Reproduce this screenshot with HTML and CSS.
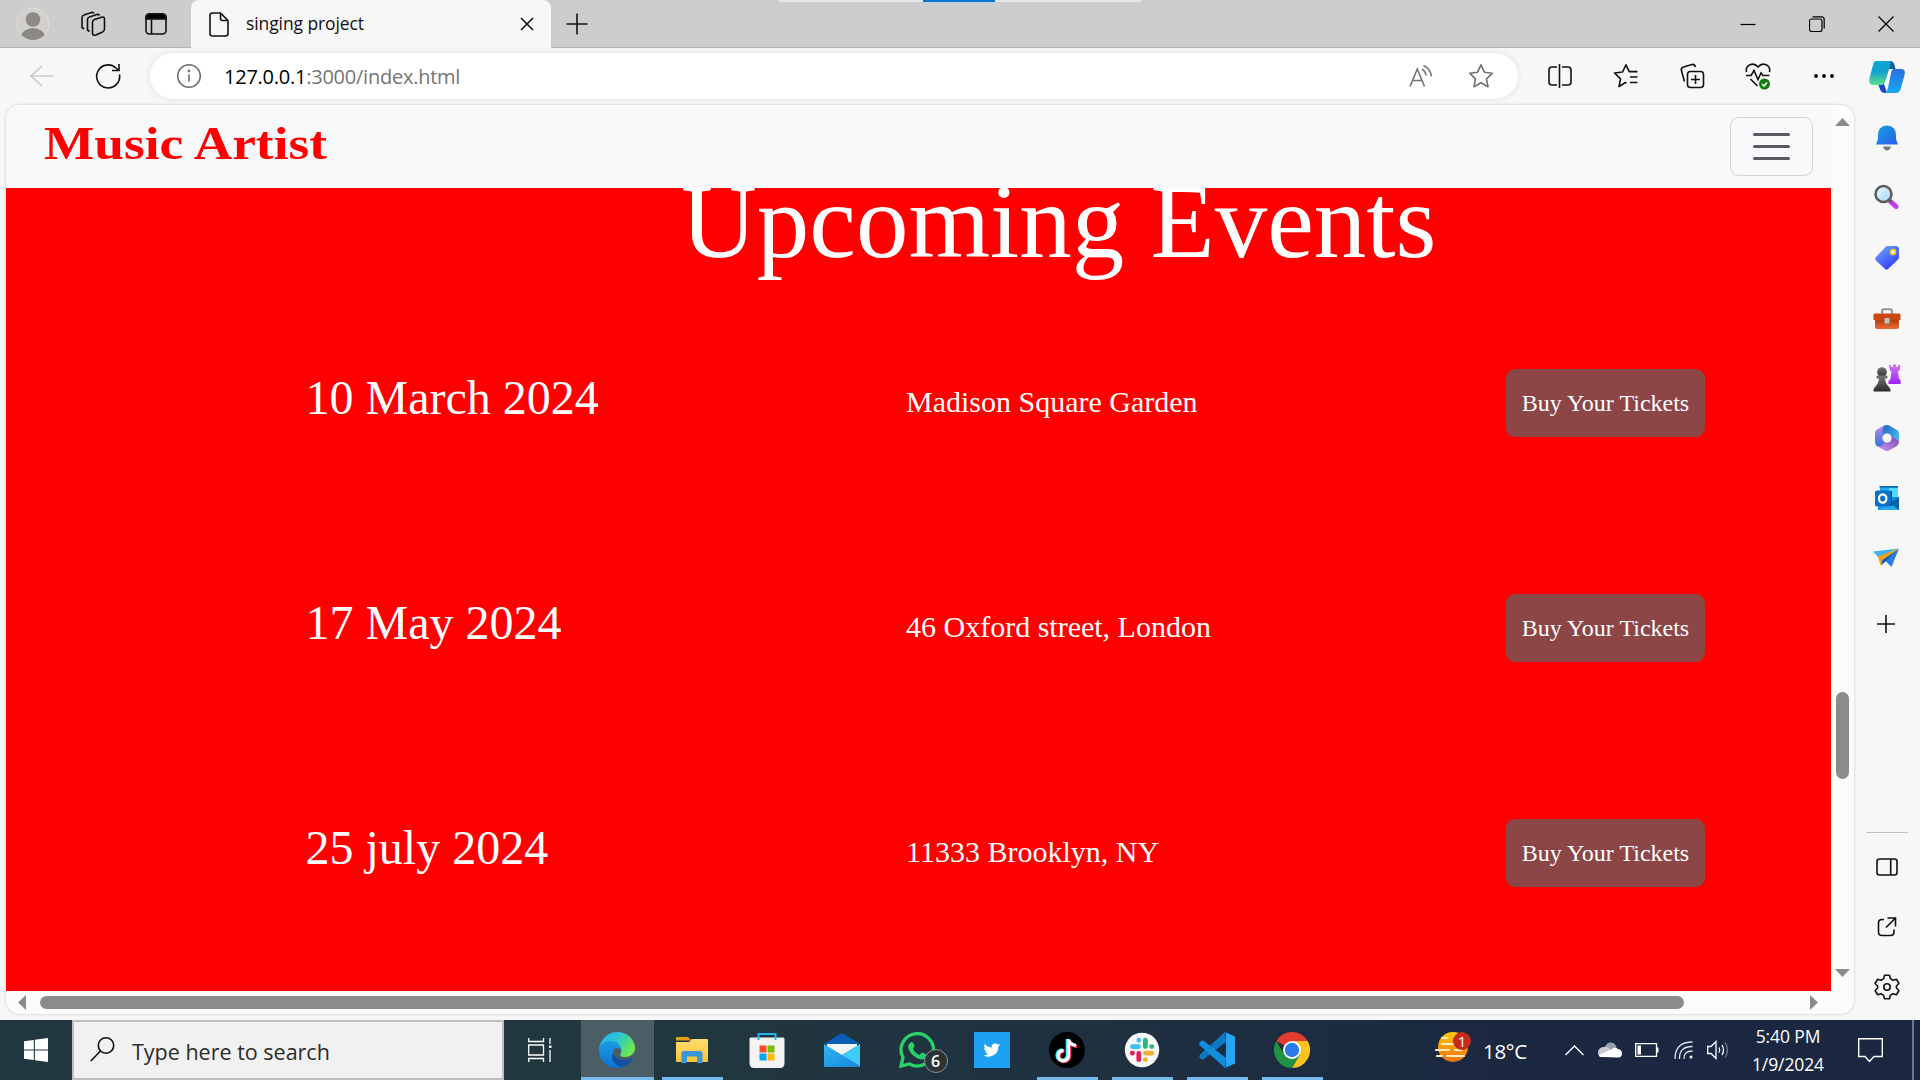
FILE: index.html
```html
<!DOCTYPE html>
<html lang="en">
<head>
<meta charset="utf-8">
<title>singing project</title>
<link rel="stylesheet" href="styles.css">
</head>
<body>
<div class="desktop">
  <header class="tabstrip">
    <div class="slot slot-avatar">
      <svg width="34" height="34" viewBox="0 0 34 34"><defs><clipPath id="av"><circle cx="17" cy="17" r="16"/></clipPath></defs><circle cx="17" cy="17" r="16" fill="#d2d0cc" stroke="#dfddd9" stroke-width="1"/><g clip-path="url(#av)" fill="#8c8883"><circle cx="17" cy="12.5" r="7.3"/><ellipse cx="17" cy="30" rx="12" ry="9"/></g></svg>
    </div>
    <div class="slot slot-work">
      <svg width="26" height="26" viewBox="0 0 26 26" class="ln"><path d="M14.500 8.500 21.500 6.200Q24.500 5.500 24.500 8V18Q24.500 20 22.500 21L16 24Q12.500 25 12.500 22V11.500Q12.500 9.200 14.500 8.500Z"/><path d="M9.500 20.500 7.500 19V8.500Q7.500 6.500 9.500 6L17 3.500Q19 3 19.500 4.500"/><path d="M4 18 2 16.500V6.500Q2 4.500 4 4L11.500 1.500Q13.500 1 14 2.500"/></svg>
    </div>
    <div class="slot slot-vtabs">
      <svg width="22" height="22" viewBox="0 0 22 22" class="ln"><rect x="1" y="1" width="20" height="20" rx="3.500"/><path d="M1 4.500Q1 1 4.500 1H17.500Q21 1 21 4.500V6H1Z" fill="#000"/><path d="M6.500 6V21"/></svg>
    </div>
    <div class="tab">
      <svg width="20" height="25" viewBox="0 0 20 25" class="ln"><path d="M3.500 1H11.500L19 8.500V21.500Q19 24 16.500 24H3.500Q1 24 1 21.500V3.500Q1 1 3.500 1ZM11.500 1V6.500Q11.500 8.500 13.500 8.500H19"/></svg>
      <span class="tab-title">singing project</span>
      <svg width="14" height="14" viewBox="0 0 14 14" class="ln"><path d="M1 1 13 13M13 1 1 13"/></svg>
    </div>
    <svg class="newtab ln" width="22" height="22" viewBox="0 0 22 22"><path d="M11 .5V21.500M.5 11H21.500"/></svg>
    <div class="snapbar"><span></span></div>
    <div class="winbtns">
      <svg width="16" height="16" viewBox="0 0 16 16" class="thin"><path d="M.5 8.500H15.500"/></svg>
      <svg width="16" height="16" viewBox="0 0 16 16" class="thin"><rect x=".5" y="3" width="12.500" height="12.500" rx="2"/><path d="M3.500 .8H12.500Q15.200 .8 15.200 3.500V12.500"/></svg>
      <svg width="16" height="16" viewBox="0 0 16 16" class="thin"><path d="M.5 .5 15.500 15.500M15.500 .5 .5 15.500"/></svg>
    </div>
  </header>

  <div class="toolbar">
    <div class="slot slot-back"><svg width="24" height="22" viewBox="0 0 24 22" class="ln pale"><path d="M24 11H1M12 1 1 11 12 21"/></svg></div>
    <div class="slot slot-reload"><svg width="26" height="26" viewBox="0 0 26 26" class="ln"><path d="M24.500 11.500A11.500 11.500 0 1 1 21 5L24 7.500M24 1V7.500H17"/></svg></div>
    <div class="address">
      <div class="slot slot-info"><svg width="26" height="26" viewBox="0 0 26 26" class="ln grey"><circle cx="13" cy="13" r="11.300"/><path d="M13 11.500V18.500"/><circle cx="13" cy="8" r=".6"/></svg></div>
      <span class="url"><b>127.0.0.1</b>:3000/index.html</span>
      <div class="slot s60"><svg width="24" height="24" viewBox="0 0 24 24" class="ln grey"><path d="M1 22.500 8.300 5 15.500 22.500M3.500 16.500H13"/><path d="M13 5Q16.500 7 17 11.500M14.500 1.500Q21.500 4.500 22.500 12.500"/></svg></div>
      <div class="slot s60"><svg width="26" height="26" viewBox="0 0 26 26" class="ln grey"><path stroke-linejoin="round" d="M13 1.800 16.400 9.200 24.300 10.200 18.500 15.800 20 23.700 13 19.800 6 23.700 7.500 15.800 1.700 10.200 9.600 9.200Z"/></svg></div>
    </div>
    <div class="tools">
      <div class="slot"><svg width="24" height="26" viewBox="0 0 24 26" class="ln"><path d="M9 4H4Q1 4 1 7V19Q1 22 4 22H9M14 4H20Q23 4 23 7V19Q23 22 20 22H14M11.500 1V25"/></svg></div>
      <div class="slot"><svg width="26" height="26" viewBox="0 0 26 26" class="ln"><path stroke-linejoin="round" d="M13.500 20 12.500 19.500 6 23.500 7.500 15.800 1.500 10 9.500 9 13 1.800 16.200 8.600H24.500M17 14H24.500M17 19.500H24.500"/></svg></div>
      <div class="slot"><svg width="26" height="26" viewBox="0 0 26 26" class="ln"><rect x="8.500" y="8.500" width="16" height="16" rx="3"/><path d="M16.500 12V21M12 16.500H21M5.500 18.500 2.500 8Q1.500 5 4.500 4L13 1.500Q15.500 1 16.500 4"/></svg></div>
      <div class="slot"><svg width="26" height="28" viewBox="0 0 26 28" class="ln"><path d="M1.500 10C0 3 8.500-.5 13 5 17.500-.5 26 3 24.500 10M1 13.500H6L9 8.500 13 17.500 16 11 18 13.500H24.500M5.500 17 12.500 24"/><circle cx="19.500" cy="22" r="5.500" fill="#107c10" stroke="none"/><path d="M17 22 19 24 22 20.500" stroke="#fff"/></svg></div>
      <div class="slot"><svg width="22" height="6" viewBox="0 0 22 6"><circle cx="3" cy="3" r="1.900"/><circle cx="11" cy="3" r="1.900"/><circle cx="19" cy="3" r="1.900"/></svg></div>
      <div class="slot slot-copilot">
        <svg width="36" height="34" viewBox="0 0 36 34"><defs><linearGradient id="c1" x1="0" y1="0" x2="0" y2="1"><stop offset="0" stop-color="#0ba5d8"/><stop offset=".45" stop-color="#12a2cf"/><stop offset="1" stop-color="#5fe08c"/></linearGradient><linearGradient id="c2" x1="0" y1="0" x2="0" y2="1"><stop offset="0" stop-color="#2b6fe0"/><stop offset="1" stop-color="#16a8f2"/></linearGradient></defs><path d="M17 1H21Q24.500 1 25.500 5L26.500 9H20Z" fill="#0d5f96"/><path d="M9 24H15L18 33H16Q12 33 11 29Z" fill="#1546cf"/><path d="M7 1H20Q22.500 1 21 6L16.500 21Q15.500 25 12 25H4Q-1 25 .5 18L4 5Q5 1 7 1Z" fill="url(#c1)"/><path d="M24 9H32Q37 9 35.500 15L32 28Q30.500 33 27 33H15.500Q18 32 19 28L22 13Q22.500 10 24 9Z" fill="url(#c2)"/><path d="M20.500 10H23Q22 11 21.500 14L19 23H15.500Q16.500 22 17 20Z" fill="#fff"/></svg>
      </div>
    </div>
  </div>

  <main class="main">
    <section class="frame">
      <div class="page">
        <nav class="navbar">
          <a class="brand">Music Artist</a>
          <button class="toggler"><i></i><i></i><i></i></button>
        </nav>
        <div class="events">
          <h1>Upcoming Events</h1>
          <div class="event"><span class="date">10 March 2024</span><span class="venue">Madison Square Garden</span><a class="buy">Buy Your Tickets</a></div>
          <div class="event"><span class="date">17 May 2024</span><span class="venue">46 Oxford street, London</span><a class="buy">Buy Your Tickets</a></div>
          <div class="event"><span class="date">25 july 2024</span><span class="venue">11333 Brooklyn, NY</span><a class="buy">Buy Your Tickets</a></div>
        </div>
      </div>
      <div class="vscroll">
        <svg width="15" height="8" viewBox="0 0 15 8"><path d="M0 8 7.500 0 15 8Z"/></svg>
        <span class="vthumb"></span>
        <svg width="15" height="8" viewBox="0 0 15 8"><path d="M0 0 7.500 8 15 0Z"/></svg>
      </div>
      <div class="hscroll">
        <svg width="8" height="15" viewBox="0 0 8 15"><path d="M8 0 0 7.500 8 15Z"/></svg>
        <span class="hthumb"></span>
        <svg width="8" height="15" viewBox="0 0 8 15"><path d="M0 0 8 7.500 0 15Z"/></svg>
      </div>
    </section>
    <aside class="sidebar">
      <div class="side"><svg width="24" height="26" viewBox="0 0 24 26"><defs><linearGradient id="b1" x1="0" y1="0" x2="1" y2="1"><stop offset="0" stop-color="#12a5dd"/><stop offset="1" stop-color="#2b5cf0"/></linearGradient></defs><path d="M8 21.500H16Q15 25.500 12 25.500T8 21.500Z" fill="#777b80"/><path d="M12 .5Q21 1 21 10V14L23 19.500H1L3 14V10Q3 1 12 .5Z" fill="url(#b1)"/></svg></div>
      <div class="side side-find"><svg width="26" height="26" viewBox="0 0 26 26"><defs><linearGradient id="s1" x1="0" y1="0" x2="1" y2="1"><stop offset="0" stop-color="#eef8ff"/><stop offset="1" stop-color="#9dd6fa"/></linearGradient></defs><path d="M18 18 23 22.500" stroke="#c438ef" stroke-width="5" stroke-linecap="round"/><path d="M15.500 15.500 18 18" stroke="#555" stroke-width="3"/><circle cx="10.500" cy="10" r="8" fill="url(#s1)" stroke="#5c5c5c" stroke-width="2.500"/></svg></div>
      <div class="side"><svg width="26" height="26" viewBox="0 0 26 26"><defs><linearGradient id="t1" x1="0" y1="0" x2=".7" y2="1"><stop offset="0" stop-color="#6fb0ff"/><stop offset="1" stop-color="#3338f0"/></linearGradient></defs><path d="M13.500 1H22Q25 1 25 4V12Q25 13.500 24 14.500L14 24Q12.500 25.500 11 24L2 15.500Q.5 14 2 12L11.500 2Q12.500 1 13.500 1Z" fill="url(#t1)"/><circle cx="19" cy="7" r="2.500" fill="#dff" stroke="#fcc419" stroke-width="1.700"/></svg></div>
      <div class="side side-tools"><svg width="28" height="22" viewBox="0 0 28 22"><defs><linearGradient id="x1" x1="0" y1="0" x2="0" y2="1"><stop offset="0" stop-color="#a93408"/><stop offset="1" stop-color="#ef6a35"/></linearGradient></defs><path d="M9 6V3.500Q9 1.300 11 1.300H17Q19 1.300 19 3.500V6" fill="none" stroke="#8e9398" stroke-width="2"/><path d="M2 10H26V19Q26 21 24 21H4Q2 21 2 19Z" fill="url(#x1)"/><path d="M2 5.500H26Q28 5.500 27.500 8V12H.5V8Q0 5.500 2 5.500Z" fill="#cb4710"/><rect x="11.500" y="10" width="5" height="5.500" rx="1" fill="#b9c4ce"/></svg></div>
      <div class="side"><svg width="28" height="28" viewBox="0 0 28 28"><defs><linearGradient id="g1" x1="0" y1="0" x2="0" y2="1"><stop offset="0" stop-color="#777"/><stop offset="1" stop-color="#2b2b2b"/></linearGradient><linearGradient id="g2" x1="0" y1="0" x2="0" y2="1"><stop offset="0" stop-color="#d07af0"/><stop offset="1" stop-color="#a020ff"/></linearGradient></defs><path d="M16 1H18V3H20V.5H23V3H25V1H27.500L26.500 7H25L26 15H27Q28 17.500 27.500 20H15.500V17L17.500 15 18.500 7H17Z" fill="url(#g2)"/><circle cx="9" cy="8" r="4.800" fill="url(#g1)"/><path d="M4 11.500H14Q15.500 13 14 14.500H12Q12.500 20 16 23Q18 25 17.500 27.500H.5Q0 25 2 23Q5.500 20 6 14.500H4Q2.500 13 4 11.500Z" fill="url(#g1)"/></svg></div>
      <div class="side"><svg width="26" height="28" viewBox="0 0 26 28"><defs><linearGradient id="m1" x1="0" y1="0" x2="0" y2="1"><stop offset="0" stop-color="#b58be8"/><stop offset="1" stop-color="#3576d8"/></linearGradient><linearGradient id="m2" x1="0" y1="0" x2="1" y2="1"><stop offset="0" stop-color="#2363c8"/><stop offset="1" stop-color="#45c6f2"/></linearGradient><linearGradient id="m3" x1="0" y1="1" x2="1" y2="0"><stop offset="0" stop-color="#c995f0"/><stop offset="1" stop-color="#7a4ba8"/></linearGradient></defs><path d="M11 1 3 5.500Q1 7 1 9V18Q1 21 3.500 22.500L7 23 13 20V8Z" fill="url(#m1)"/><path d="M10 2Q13 0 16 2L23 6Q25 7.500 25 10V17L18 12 9 12Q8 5 10 2Z" fill="url(#m2)"/><path d="M25 17V18Q25 20.500 23 22L15 26.500Q13 27.500 11 26.500L3.500 22.500Q8 23 11 18L17 11Z" fill="url(#m3)"/><circle cx="13" cy="14" r="4.600" fill="#f7f7f7"/></svg></div>
      <div class="side"><svg width="26" height="26" viewBox="0 0 26 26"><path d="M6 1H24V13H6Z" fill="#28a8ea"/><path d="M15 3H24V12H15Z" fill="#50d9ff"/><path d="M5.500 1H24V2.500H5.500Z" fill="#0864b0"/><path d="M4 12H25V25H4Z" fill="#1490df"/><path d="M25 12V25L16 18Z" fill="#0a5fa8"/><path d="M4 25H25L15 18Z" fill="#28a8ea"/><path d="M14 6H18V21H6V20H14Z" fill="#0a4375"/><rect x="1" y="5.500" width="16" height="16" rx="2" fill="#0b70c8"/><ellipse cx="8.700" cy="13.500" rx="3.700" ry="4.200" fill="none" stroke="#fff" stroke-width="2.200"/></svg></div>
      <div class="side side-send"><svg width="28" height="20" viewBox="0 0 28 20"><path d="M0 3.500 26 .5 5.500 9.500Z" fill="#3fb2ee"/><path d="M26 .5 18.500 19 12.500 13Z" fill="#2a7be8"/><path d="M8 17.500 9 12 26 .5 12.500 13.500Z" fill="#1656ba"/><path d="M26 .5 5 8.500 7.500 17 10 11.500Z" fill="#f0a112"/></svg></div>
      <div class="side side-add"><svg width="18" height="18" viewBox="0 0 18 18" class="ln"><path d="M9 0V18M0 9H18"/></svg></div>
      <div class="side-bottom">
        <div class="side"><svg width="22" height="18" viewBox="0 0 22 18" class="ln"><rect x="1" y="1" width="20" height="16" rx="2.500"/><path d="M14.700 1V17"/></svg></div>
        <div class="side"><svg width="20" height="20" viewBox="0 0 20 20" class="ln"><path d="M7 2.500H5Q1.500 2.500 1.500 6V15Q1.500 18.500 5 18.500H13.500Q17 18.500 17 15V12.500M10.500 1H18.500V9.500M18.500 1 9 10.500"/></svg></div>
        <div class="side"><svg width="26" height="26" viewBox="0 0 26 26" class="ln"><path d="M10.500 1.200H15.500L16.300 4.600 19 6.200 22.400 5.200 24.900 9.500 22.400 12V14L24.900 16.500 22.400 20.800 19 19.800 16.300 21.400 15.500 24.800H10.500L9.700 21.400 7 19.800 3.600 20.800 1.100 16.500 3.600 14V12L1.100 9.500 3.600 5.200 7 6.200 9.700 4.600Z" stroke-linejoin="round"/><circle cx="13" cy="13" r="3.200"/></svg></div>
      </div>
    </aside>
  </main>

  <footer class="taskbar">
    <div class="slot start"><svg width="24" height="24" viewBox="0 0 24 24" fill="#fff"><path d="M0 3.300 9.800 2V11.400H0ZM10.900 1.800 24 0V11.400H10.900ZM0 12.500H9.800V22L0 20.700ZM10.900 12.500H24V24L10.900 22.200Z"/></svg></div>
    <div class="search"><svg width="25" height="27" viewBox="0 0 25 27" class="ln"><circle cx="16" cy="8.500" r="7.700"/><path d="M10.500 14 .8 24"/></svg><span>Type here to search</span></div>
    <div class="slot taskview"><svg width="24" height="24" viewBox="0 0 24 24" fill="none" stroke="#fff" stroke-width="1.300"><path d="M.7 0V3.500H15.500V0M.7 24V20.500H15.500V24M.7 7H15.500V17H.7ZM22 0V6M22 12V24"/><rect x="21" y="7.500" width="2.500" height="2.500" fill="#fff" stroke="none"/></svg></div>
    <div class="app app-active"><svg width="36" height="36" viewBox="0 0 36 36"><defs><linearGradient id="e1" x1="0" y1="0" x2="1" y2=".5"><stop offset="0" stop-color="#2ab0f0"/><stop offset=".5" stop-color="#2cc3d5"/><stop offset="1" stop-color="#66ea50"/></linearGradient><linearGradient id="e2" x1="0" y1="0" x2="0" y2="1"><stop offset="0" stop-color="#1b9de2"/><stop offset="1" stop-color="#0a74d4"/></linearGradient></defs><path d="M0 18C1 7 9 0 18 0C29 0 36 8 36 16C36 22 31 25 26 25C22 25 20 23.500 22 21C24 16 18 10 11 10C5 10 1 14 0 18Z" fill="url(#e1)"/><path d="M0 18C1 12 6 9 12 9C18 9 22 13 22 18C20 15 14 15 14 21C14 28 21 31 27 30C29 32 23 36 18 36C8 36 0 28 0 18Z" fill="url(#e2)"/><path d="M14 21C11 26 15 34 23 35C28 34 32 30 34 27C34.500 26 33.500 25.500 32.500 26C24 30 16 27 14 21Z" fill="#1152a4"/></svg></div>
    <div class="app open"><svg width="32" height="28" viewBox="0 0 32 28"><defs><linearGradient id="f1" x1="0" y1="0" x2="0" y2="1"><stop offset="0" stop-color="#ffdb70"/><stop offset="1" stop-color="#f8c534"/></linearGradient></defs><path d="M0 2Q0 1 1 1H12L15.500 4.500H0Z" fill="#e2a20c"/><path d="M0 6H13L16 3H31Q32 3 32 4V25Q32 26 31 26H1Q0 26 0 25Z" fill="url(#f1)"/><path d="M5.500 17Q5.500 15 7.500 15H24Q26.500 15 26.500 17V27H21V20.500H11V27H5.500Z" fill="#3a96dc"/></svg></div>
    <div class="app"><svg width="36" height="36" viewBox="0 0 36 36"><path d="M9.500 8V2H26.500V8" fill="none" stroke="#27b3ee" stroke-width="2"/><path d="M.5 7Q.5 5.500 2 5.500H34Q35.500 5.500 35.500 7V31Q35.500 36 31 36H5Q.5 36 .5 31Z" fill="#f3f3f3"/><path d="M10.500 13.500H17.500V20.500H10.500Z" fill="#f25022"/><path d="M18.500 13.500H25.500V20.500H18.500Z" fill="#7fba00"/><path d="M10.500 21.500H17.500V28.500H10.500Z" fill="#00a4ef"/><path d="M18.500 21.500H25.500V28.500H18.500Z" fill="#ffb900"/><path d="M9.500 5V8M26.500 5V8" stroke="#27b3ee" stroke-width="2"/></svg></div>
    <div class="app"><svg width="36" height="34" viewBox="0 0 36 34"><defs><linearGradient id="ml" x1="0" y1="0" x2="1" y2="1"><stop offset="0" stop-color="#34b6ee"/><stop offset="1" stop-color="#1686dc"/></linearGradient></defs><path d="M0 11 15 1.500Q18-.5 21 1.500L36 11Z" fill="#0b5cb5"/><path d="M3 11H33V20L18 24 3 20Z" fill="#f2f2f2"/><path d="M0 11 18 22 36 11V34H0Z" fill="url(#ml)"/><path d="M36 11V33L18 22Z" fill="#41cbf8"/></svg></div>
    <div class="app"><div class="badged"><svg width="36" height="36" viewBox="0 0 36 36"><path d="M2 34 4 25.500A16.200 16.200 0 1 1 10.500 32Z" fill="none" stroke="#25d366" stroke-width="3.300"/><path d="M12.500 10Q14.500 10 15.500 14Q15 16 14 17Q16.500 21.500 20.500 23L23 20.500Q28 22 27.500 24Q26 28 22 27.500Q12 25 9 15.500Q9 11.500 12.500 10Z" fill="#25d366"/></svg><span class="badge">6</span></div></div>
    <div class="app"><svg width="36" height="36" viewBox="0 0 36 36"><path d="M0 0H36V36H0Z" fill="#1da1f2"/><path transform="translate(9.500 9.700) scale(.69)" fill="#fff" d="M24 4.600c-.9.400-1.800.7-2.800.8 1-.6 1.800-1.600 2.200-2.700-1 .6-2 1-3.100 1.200A4.900 4.900 0 0 0 11.900 8.400C7.800 8.200 4.200 6.200 1.700 3.200.4 5.400 1 8.300 3.200 9.700c-.8 0-1.600-.2-2.200-.6 0 2.300 1.600 4.400 3.900 4.900-.7.200-1.500.2-2.200.1.600 2 2.400 3.400 4.600 3.400A9.900 9.900 0 0 1 0 19.500 14 14 0 0 0 21.500 7.100c1-.7 1.800-1.600 2.500-2.500z"/></svg></div>
    <div class="app open"><svg width="36" height="36" viewBox="0 0 36 36"><circle cx="18" cy="18" r="18"/><g fill="none" stroke-width="3.600"><path d="M18.500 7V23A5.200 5.200 0 1 1 13.500 18M18.500 7Q19.500 12 26 13" stroke="#25f4ee"/><path d="M20.500 8.500V24A5.200 5.200 0 1 1 15.500 19M20.500 8.500Q21.500 13.500 28 14.500" stroke="#fe2c55"/><path d="M19.500 7.500V23.500A5.200 5.200 0 1 1 14.500 18.500M19.500 7.500Q20.500 12.500 27 13.500" stroke="#fff" stroke-width="3.200"/></g></svg></div>
    <div class="app open"><svg width="36" height="36" viewBox="0 0 36 36"><circle cx="18" cy="18" r="17.200" fill="#f7f7f7"/><g stroke-width="4.800" stroke-linecap="round"><path d="M8.500 14.600H14.500M14.800 8.200V8.300" stroke="#36c5f0"/><path d="M21.400 8.200V14.500M27.700 14.600H27.800" stroke="#2eb67d"/><path d="M21.500 21.200H27.700M21.400 27.600V27.700" stroke="#ecb22e"/><path d="M14.800 21.500V27.700M8.300 21.200H8.400" stroke="#e01e5a"/></g></svg></div>
    <div class="app open"><svg width="36" height="36" viewBox="0 0 36 36"><path d="M26 0 1 22.500Q-.5 24.500 1 26L2.500 27.200Q3.500 27.800 5 27L27 10Z" fill="#0f79bf"/><path d="M26 36 1 13.500Q-.5 11.500 1 10L2.500 8.800Q3.500 8.200 5 9L27 26Z" fill="#108ddb"/><path d="M26 0 36 4.500V31.500L26 36Q27 35 27 33V3Q27 1 26 0Z" fill="#27a5f3"/></svg></div>
    <div class="app open"><svg width="36" height="36" viewBox="0 0 36 36"><path d="M18 18 2.400 9A18 18 0 0 1 33.600 9Z" fill="#e33b2e"/><path d="M18 9H33.600A18 18 0 0 1 18 36L25.800 22.500Z" fill="#fcc31e"/><path d="M2.400 9A18 18 0 0 0 18 36L25.800 22.500 10.200 22.500Z" fill="#1f9246"/><circle cx="18" cy="18" r="9" fill="#fff"/><circle cx="18" cy="18" r="7.200" fill="#2c7bea"/></svg></div>
    <div class="tray">
      <svg class="weather" width="37" height="36" viewBox="0 0 37 36"><defs><linearGradient id="w1" x1="0" y1="0" x2="0" y2="1"><stop offset="0" stop-color="#fdc90a"/><stop offset="1" stop-color="#f07014"/></linearGradient></defs><circle cx="18" cy="15" r="15" fill="url(#w1)"/><g stroke="#ffe9b8" stroke-width="2.200" stroke-linecap="round"><path d="M7 6H12M7 12H18M1 18H14M20 18H27M7 24H2M12 24H29"/></g><circle cx="27" cy="9" r="9" fill="#c42b1c"/><text x="27" y="14.500" text-anchor="middle" class="wnum">1</text></svg>
      <span class="temp">18°C</span>
      <svg class="chev" width="19" height="11" viewBox="0 0 19 11" fill="none" stroke="#fff" stroke-width="1.400"><path d="M.5 10 9.500 1 18.500 10"/></svg>
      <svg class="cloud" width="24" height="16" viewBox="0 0 24 16"><path d="M7 5Q9 0 13 .5 18 1 18.500 6L11 10 3 7Z" fill="#99a0ab"/><path d="M5 5Q10 3.500 13 8L8 15H4Q0 15 0 10.500 0 6 5 5Z" fill="#c6cad1"/><path d="M4 15Q1 15 1 13L14 7Q17 4.500 20 7 24 7.500 24 11.500 24 15.500 20 15.500Z" fill="#fff"/></svg>
      <svg class="batt" width="24" height="14" viewBox="0 0 24 14"><path d="M.7 .7H21.500V13.300H.7Z" fill="none" stroke="#fff" stroke-width="1.300"/><path d="M2.500 2.500H6V11.500H2.500ZM22 4.500H23.500V9.500H22Z" fill="#fff"/></svg>
      <svg class="wifi" width="20" height="20" viewBox="0 0 20 20" fill="none" stroke="#dfe2e8" stroke-width="1.300"><path d="M1 19Q1 2 18.500 2M5.500 19Q5 6.500 18.500 6.500M10 19Q9.500 11 18.500 11" /><circle cx="17" cy="17" r="1.500" fill="#fff" stroke="none"/></svg>
      <svg class="vol" width="23" height="20" viewBox="0 0 23 20" fill="none" stroke="#fff" stroke-width="1.300"><path d="M.7 6.500H4L9 1.500V18.500L4 13.500H.7Z"/><path d="M12 7.500Q13.500 10 12 12.500M15 5Q18 10 15 15"/><path d="M18 2.500Q23 10 18 17.500" stroke="#727b8c"/></svg>
      <div class="clock"><span>5:40 PM</span><span>1/9/2024</span></div>
      <svg class="note" width="25" height="25" viewBox="0 0 25 25" fill="none" stroke="#fff" stroke-width="1.400"><path d="M.7 .7H24.300V18.500H16L11.500 23.500 7 18.500H.7Z"/></svg>
      <i class="peek"></i>
    </div>
  </footer>
</div>
</body>
</html>
```
FILE: styles.css
```css
* { box-sizing: border-box; }
body { margin: 0; font-family: "Open Sans", "Noto Sans", sans-serif; color: #111; }
svg { display: block; flex: none; }
.desktop { width: 1920px; height: 1080px; display: flex; flex-direction: column; overflow: hidden; background: #f7f7f7; }
.ln { fill: none; stroke: #111; stroke-width: 1.6; }
.thin { fill: none; stroke: #000; stroke-width: 1.2; }
.pale { stroke: #cacaca; }
.grey { stroke: #707070; }
.slot { display: flex; align-items: center; justify-content: center; flex: none; }

/* tab strip */
.tabstrip { position: relative; height: 48px; flex: none; display: flex; align-items: center; background: #cdcdcd; box-shadow: inset 0 -2px 1px -1px #b2b2b2; }
.slot-avatar { width: 66px; }
.slot-work { width: 54px; }
.slot-vtabs { width: 71px; }
.tab { width: 360px; height: 48px; display: flex; align-items: center; padding: 0 17px 0 18px; background: #f7f7f7; border-radius: 8px 8px 0 0; }
.tab-title { flex: 1; margin-left: 17px; padding-bottom: 2px; font-size: 17.5px; letter-spacing: -.1px; white-space: nowrap; }
.newtab { margin-left: 15px; }
.snapbar { position: absolute; left: 779px; top: 0; width: 362px; height: 2px; background: #e6e6e6; display: flex; padding-left: 144px; }
.snapbar span { width: 72px; background: #0078d7; }
.winbtns { margin-left: auto; padding-right: 26px; display: flex; gap: 53px; }

/* toolbar */
.toolbar { height: 57px; flex: none; display: flex; align-items: center; padding-bottom: 1px; background: #f7f7f7; }
.slot-back { width: 83px; }
.slot-reload { width: 50px; }
.address { width: 1368px; height: 46px; margin-left: 17px; padding-right: 7px; display: flex; align-items: center; border-radius: 23px; background: #fff; box-shadow: 0 0 6px rgba(0,0,0,.1); }
.slot-info { width: 74px; padding-left: 4px; }
.url { flex: 1; color: #757575; font-size: 20px; letter-spacing: -.24px; white-space: nowrap; }
.url b { font-weight: 400; color: #000; }
.s60 { width: 60px; }
.tools { display: flex; align-items: center; margin-left: 9px; }
.tools .slot { width: 66px; }
.tools .slot-copilot { width: 63px; padding: 1px 4px 0 0; }

/* browser viewport */
.main { flex: 1; min-height: 0; display: flex; }
.frame { width: 1848px; height: 909px; margin-left: 6px; flex: none; display: grid; grid-template-columns: 1825px 23px; grid-template-rows: 886px 23px; background: #fcfcfc; border-radius: 14px; overflow: hidden; box-shadow: 0 0 2px 1px #dedede; }
.page { display: flex; flex-direction: column; min-height: 0; overflow: hidden; }
.navbar { height: 83px; flex: none; display: flex; align-items: center; justify-content: space-between; padding: 0 18px 0 38px; background: #f8f9fa; }
.brand { font: 700 47px/60px "Liberation Serif", serif; color: #f00; padding-bottom: 7px; transform: scaleX(1.135); transform-origin: left; }
.toggler { width: 83px; height: 59px; padding: 0; display: flex; flex-direction: column; align-items: center; justify-content: center; gap: 9px; background: transparent; border: 1px solid #d3d4d6; border-radius: 9px; }
.toggler i { width: 37px; height: 3px; border-radius: 2px; background: #585a60; }
.events { flex: 1; min-height: 0; overflow: hidden; background: #f00; color: #fff; font-family: "Liberation Serif", serif; }
.events h1 { margin: -29px 0 5px 675px; font-weight: 400; font-size: 105px; line-height: 126px; white-space: nowrap; }
.event { height: 225px; padding-left: 300px; display: grid; grid-template-columns: 600px 600px 199px; align-items: center; }
.date { font-size: 48px; padding-bottom: 10px; margin-left: -.5px; }
.venue { font-size: 30px; padding-bottom: 2px; }
.buy { height: 68px; line-height: 69px; text-align: center; font-size: 24px; border-radius: 9px; background: #8c4646; }

.vscroll { padding: 13px 0 14px; display: flex; flex-direction: column; align-items: center; fill: #8b8b8b; }
.vthumb { width: 13px; height: 87px; margin: 566px 0 auto; border-radius: 7px; background: #8b8b8b; }
.hscroll { display: flex; align-items: center; padding: 0 13px 0 12px; fill: #8b8b8b; }
.hthumb { width: 1644px; height: 13px; margin: 0 auto 0 14px; border-radius: 7px; background: #8b8b8b; }

/* sidebar */
.sidebar { width: 66px; padding-top: 3px; display: flex; flex-direction: column; align-items: center; }
.side { height: 60px; display: flex; align-items: center; }
.side-find { padding: 0 2px 2px 0; }
.side-tools { padding-top: 2px; }
.side-send { padding-right: 1px; }
.side-add { height: 70px; padding: 1px 2px 0 0; }
.side-bottom { margin: auto 0 3px; width: 42px; border-top: 1px solid #c0c0c0; padding-top: 4px; display: flex; flex-direction: column; align-items: center; }

/* taskbar */
.taskbar { height: 60px; flex: none; display: flex; background: linear-gradient(90deg, #21373f 0, #21373f 700px, #1f3040 1100px, #1b2840 1500px, #1b2742); color: #fff; }
.start { width: 72px; }
.search { width: 432px; display: flex; align-items: center; padding: 0 0 0 16px; gap: 17px; background: #f1f1f1; border: 2px solid #bfbfbf; color: #2b2b2b; font-size: 21.5px; letter-spacing: 0; white-space: nowrap; }
.search span { padding-top: 2px; }
.taskview { width: 77px; padding-right: 5px; }
.app { width: 61px; margin-right: 14px; display: flex; align-items: center; justify-content: center; border-bottom: 3px solid transparent; border-top: 3px solid transparent; flex: none; }
.app-active { width: 73px; margin-right: 8px; padding-right: 2px; background: #4b5e65; border-bottom-color: #76b9ed; border-top-color: #4b5e65; }
.app:not(.app-active) { padding-right: 2px; }
.open { border-bottom-color: #76b9ed; }
.badged { position: relative; }
.badge { position: absolute; left: 25px; top: 17px; width: 24px; height: 24px; border-radius: 50%; border: 1px solid #8d9296; background: #2e3336; font-weight: 600; font-size: 16px; line-height: 22px; text-align: center; }
.tray { flex: 1; display: flex; align-items: center; padding-left: 98px; }
.weather { margin-bottom: 0; }
.wnum { fill: #fff; font-size: 15px; }
.temp { width: 45px; margin: 1px 0 0 11px; font-size: 20.5px; letter-spacing: -.3px; white-space: nowrap; }
.chev { margin-left: 37px; }
.cloud { margin-left: 14px; }
.batt { margin-left: 13px; }
.wifi { margin-left: 15px; }
.vol { margin-left: 13px; }
.clock { width: 84px; margin-left: 16px; display: flex; flex-direction: column; align-items: center; font-size: 17.5px; line-height: 28px; letter-spacing: -.1px; white-space: nowrap; }
.note { margin-left: 28px; }
.peek { width: 2px; height: 60px; margin: 0 6px 0 auto; background: #6d7689; }
```
